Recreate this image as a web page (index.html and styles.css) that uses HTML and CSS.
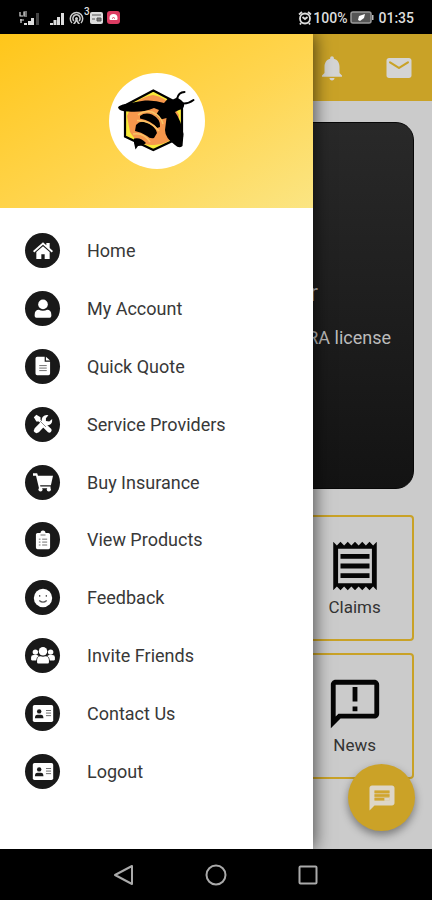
FILE: index.html
```html
<!DOCTYPE html>
<html lang="en">
<head>
<meta charset="utf-8">
<meta name="viewport" content="width=device-width, initial-scale=1">
<title>Menu</title>
<link rel="stylesheet" href="styles.css">
</head>
<body>
<div class="phone">
  <div class="status">
    <div class="status-left">
      <svg width="21" height="14" viewBox="0 0 21 14"><path d="M1 1v4h3M8 1H5v4h3M5 3h3M1 9h4M2 8v4" fill="none" stroke="#ddd" stroke-width="1.2"/><path d="M5 14v-2h3v2zM9 14v-4h3v4zM12 14V7h3v7z" fill="#ddd"/><path d="M17 14V2h3v12z" fill="#444"/></svg>
      <svg class="signal" width="15" height="14" viewBox="0 0 15 14"><path d="M0 14v-2h3v2zM3.500 14V9h3v5zM7 14V6h3v8zM11 14V2h3v12z" fill="#ddd"/></svg>
      <svg class="hotspot" width="15" height="14" viewBox="0 0 15 14"><g fill="none" stroke="#ccc" stroke-width="1.5"><path d="M3 12a6.2 6.2 0 1 1 9 0M5 10a3.6 3.6 0 1 1 5 0"/></g><path d="M7.500 6a2 2 0 0 1 1 3l2.500 4H9L7.500 10.500 6 13H4l2.500-4a2 2 0 0 1 1-3z" fill="#ccc"/></svg>
      <span class="count">3</span>
      <svg width="13" height="12" viewBox="0 0 13 12"><rect width="13" height="12" rx="2" fill="#ddd"/><path d="M2 3h9M7 6h4v3H7zM2 7h3" stroke="#555" fill="#777"/></svg>
      <svg class="app" width="13" height="13" viewBox="0 0 13 13"><rect width="13" height="13" rx="3" fill="#dc3c62"/><path d="M2.500 7a4 4 0 0 1 8 0v1q0 1-1 1h-6q-1 0-1-1z" fill="#fff"/><path d="M5 7.500q1.500-2 3 0" stroke="#dc3c62" fill="none"/></svg>
    </div>
    <div class="status-right">
      <svg width="14" height="14" viewBox="0 0 14 14"><g fill="none" stroke="#ddd" stroke-width="1.800"><circle cx="7" cy="7.500" r="5"/><path d="M1 3.500 4 1M13 3.500 10 1M4.500 6 7 8l2.500-2M3 12l-1 1.500M11 12l1 1.500"/></g></svg>
      <span>100%</span>
      <svg class="battery" width="24" height="13" viewBox="0 0 24 13"><rect x="1" y="1" width="20" height="11" rx="2" fill="#555" stroke="#999" stroke-width="1.500"/><path d="M22 4h1.500v5H22z" fill="#bbb"/><path d="M8 9l1-4 6-2-1 4-4 3z" fill="#fff"/></svg>
      <span>01:35</span>
    </div>
  </div>

  <div class="screen">
    <main class="page">
      <header class="appbar">
        <button class="icon-button" aria-label="Notifications"><svg width="30" height="30" viewBox="0 0 24 24"><path d="M12 22c1.100 0 2-.9 2-2h-4c0 1.100.9 2 2 2zm6-6v-5c0-3.070-1.630-5.640-4.500-6.320V4c0-.83-.67-1.500-1.500-1.500s-1.500.67-1.500 1.500v.68C7.640 5.360 6 7.920 6 11v5l-2 2v1h16v-1l-2-2z"/></svg></button>
        <button class="icon-button" aria-label="Messages"><svg width="30" height="30" viewBox="0 0 24 24"><path d="M20 4H4c-1.100 0-2 .9-2 2v12c0 1.100.9 2 2 2h16c1.100 0 2-.9 2-2V6c0-1.100-.9-2-2-2zm-.4 4.250-7.070 4.420c-.32.2-.74.2-1.060 0L4.400 8.250a.85.85 0 1 1 .9-1.440L12 11l6.700-4.190a.85.85 0 1 1 .9 1.440z"/></svg></button>
      </header>
      <section class="hero">
        <p class="hero-title">r</p>
        <p class="hero-text">RA license</p>
      </section>
      <section class="tiles">
        <a class="tile" href="#claims"><svg width="58" height="58" viewBox="0 0 24 24"><path d="M19.500 3.500 18 2l-1.500 1.500L15 2l-1.500 1.500L12 2l-1.500 1.500L9 2 7.500 3.500 6 2 4.500 3.500 3 2v20l1.500-1.500L6 22l1.500-1.500L9 22l1.500-1.500L12 22l1.500-1.500L15 22l1.500-1.500L18 22l1.500-1.500L21 22V2l-1.500 1.500zM19 19.090H5V4.910h14v14.180zM6 15h12v2H6zm0-4h12v2H6zm0-4h12v2H6z"/></svg>Claims</a>
        <a class="tile" href="#news"><svg width="58" height="58" viewBox="0 0 24 24"><path d="M20 2H4c-1.100 0-2 .9-2 2v18l4-4h14c1.100 0 2-.9 2-2V4c0-1.100-.9-2-2-2zm0 14H5.170L4 17.170V4h16v12zM11 5h2v6h-2zm0 8h2v2h-2z"/></svg>News</a>
      </section>
      <button class="fab" aria-label="Chat"><svg width="30" height="30" viewBox="0 0 24 24"><path d="M20 2H4c-1.100 0-2 .9-2 2v18l4-4h14c1.100 0 2-.9 2-2V4c0-1.100-.9-2-2-2z" fill="#ddd6c8"/><path d="M6 6h12v8H6z" fill="#d8bf80"/><path d="M6 6h12v2H6zm0 3h12v2H6zm0 3h8v2H6z" fill="#d0a52f"/><path d="M14 12h4v2h-4z" fill="#ddd6c8"/></svg></button>
    </main>

    <aside class="drawer">
      <div class="drawer-head">
        <div class="logo">
          <svg width="78" height="66" viewBox="0 0 78 66">
            <path d="M35.300 2.500 64 17.500v31L35.300 62 7 48.500v-31z" fill="#f8ea38" stroke="#000" stroke-width="2.200"/>
            <path d="M35 7Q47 9 57 20L61 27 60 45Q50 57 36 57 20 58 12 44L9 28Q16 10 35 7z" fill="#f6974c"/>
            <path d="M0 19.500Q1 17 8 16 18 13.500 27 12.500 38 12 46 15L50 10.500 54 12 59 9.500 63 12 66 15Q67 21 61 22L57 24Q63 32 65.500 46L64.500 58Q61 61 57 57 47 50 47 42L48.500 30 43 31.500 38 27 41 22 36 20Q24 25 10 23.500 1 23.500 0 19.500z"/>
            <path d="M22 28Q27 24 34 26.500 43 31 42 39L39 40Q34 33 22 30.500zM18 37Q22 32 29 34.500 38 39 39 45L36 50Q32 51 29 48 23 44 17 43zM16 50.500Q23 49 28 55 25 58 20 58L17.500 61.500 16 55z"/>
            <path d="M19 32.500Q32 32 41 43M20 27Q26 22 34 24 43 28 45 36M15 46Q26 44 32 54" fill="none" stroke="#f9c565" stroke-width="1.500"/>
            <path d="M59 11Q60.500 4 66.500 4M65 15.500Q70 16 75.500 12" fill="none" stroke="#000" stroke-width="2" stroke-linecap="round"/>
          </svg>
        </div>
      </div>
      <nav class="menu">
        <a href="#home"><span class="dot"><svg viewBox="0 0 24 24"><path d="M0 12 12 1.500 16 5V2.500h4V8.500l4 3.500-1.500 1.700L12 4.600 1.500 13.700z"/><path d="M4 13.200 12 6.400l8 6.800V21.500h-6V16h-4v5.500H4z"/></svg></span>Home</a>
        <a href="#account"><span class="dot"><svg viewBox="0 0 24 24"><circle cx="12" cy="6.500" r="5.800"/><path d="M2 19c0-4 2-6 5-6 3 1.500 7 1.500 10 0 3 0 5 2 5 6v1.500q0 2-2 2H4q-2 0-2-2z"/></svg></span>My Account</a>
        <a href="#quote"><span class="dot"><svg viewBox="0 0 24 24"><path d="M5 1h9v6h6.500v14q0 2-2 2H5q-2 0-2-2V3q0-2 2-2zM15.500 1l5 4.500h-5z"/><path class="cut" d="M7.500 11.500h9M7.500 14.500h9M7.500 17.500h9"/></svg></span>Quick Quote</a>
        <a href="#providers"><span class="dot"><svg viewBox="0 0 24 24"><path d="M1 4 4 1l5 3v3l4 4 1-.5 8 7.500q1 2-.5 3.500t-3.500.5l-7-7 .5-1.500L7 9H4z"/><path d="M23 6 19.500 9 15.500 8.500V5L18.500 1.500q-4-1-7 2-1.500 2-1 5L2 17q-2 3 0 5t5 0L15 13.500q3.500 1 6.500-1.500 2-2 1.500-6z"/><path class="cut" d="m8.500 8.500 7 7" stroke-width=".8"/></svg></span>Service Providers</a>
        <a href="#buy"><span class="dot"><svg viewBox="0 0 24 24"><path d="M0 1.500h5l1 3H24L21.500 16H8.500l.4 1.500H21v2H7.200L3.600 4.500H0z"/><circle cx="9" cy="21" r="2.500"/><circle cx="19" cy="21" r="2.500"/></svg></span>Buy Insurance</a>
        <a href="#products"><span class="dot"><svg viewBox="0 0 24 24"><path d="M5.500 3.500H9q0-3 3-3t3 3h3.500q2 0 2 2V21q0 2-2 2h-13q-2 0-2-2V5.500q0-2 2-2z"/><path class="cut" d="M9 6h6M7 11h2M11 11h6M7 14.500h2M11 14.500h6M7 18h2M11 18h6"/></svg></span>View Products</a>
        <a href="#feedback"><span class="dot"><svg viewBox="0 0 24 24"><circle cx="12" cy="12" r="11"/><path class="cut" d="M8 8.500v2M16 8.500v2M7.500 15q4.500 4 9 0" stroke-width="1.500"/></svg></span>Feedback</a>
        <a href="#invite"><span class="dot"><svg class="wide" viewBox="0 0 28 20"><circle cx="5" cy="6" r="3.200"/><circle cx="23" cy="6" r="3.200"/><path d="M0 15v-3q0-2.500 3-2.500h4l2 1Q6 12 6 16H1zM28 15v-3q0-2.500-3-2.500h-4l-2 1q3 1.500 3 5.500h5z"/><circle cx="14" cy="5" r="5"/><path d="M7 18v-2q0-5 4-5 3 1 6 0 4 0 4 5v2q0 1.500-1.500 1.500h-11Q7 19.500 7 18z"/></svg></span>Invite Friends</a>
        <a href="#contact"><span class="dot"><svg class="wide" viewBox="0 0 28 20"><rect x="2" width="24" height="20" rx="2"/><circle cx="9.500" cy="7.500" r="2.600" class="ink"/><path class="ink" d="M4.500 15.500q0-4 3-4h4q3 0 3 4z"/><path class="cut" d="M17.500 6.500h6M17.500 9.500h6M17.500 12.500h6" stroke-width="1"/></svg></span>Contact Us</a>
        <a href="#logout"><span class="dot"><svg class="wide" viewBox="0 0 28 20"><rect x="2" width="24" height="20" rx="2"/><circle cx="9.500" cy="7.500" r="2.600" class="ink"/><path class="ink" d="M4.500 15.500q0-4 3-4h4q3 0 3 4z"/><path class="cut" d="M17.500 6.500h6M17.500 9.500h6M17.500 12.500h6" stroke-width="1"/></svg></span>Logout</a>
      </nav>
    </aside>
  </div>

  <div class="navbar">
    <button aria-label="Back"><svg width="22" height="22" viewBox="0 0 22 22"><path d="M19 2v18L2 11z"/></svg></button>
    <button aria-label="Home screen"><svg width="22" height="22" viewBox="0 0 22 22"><circle cx="11" cy="11" r="9.500"/></svg></button>
    <button aria-label="Recent apps"><svg width="22" height="22" viewBox="0 0 22 22"><rect x="2.500" y="2.500" width="17" height="17" rx="1"/></svg></button>
  </div>
</div>
</body>
</html>
```
FILE: styles.css
```css
* { box-sizing: border-box; }
body { margin: 0; font-family: Roboto, "Liberation Sans", sans-serif; }
button { padding: 0; border: 0; background: none; }
a { color: inherit; text-decoration: none; }
p { margin: 0; }
svg { display: block; flex: none; }

.phone { display: flex; flex-direction: column; min-height: 100vh; background: #000; }

.status {
  height: 34px; padding: 1px 18px 0 19px;
  display: flex; justify-content: space-between; align-items: center;
  color: #ddd; font-size: 14px; font-weight: 500;
}
.status-left, .status-right { display: flex; align-items: center; }
.signal { margin-left: 10px; }
.hotspot { margin-left: 4px; }
.count { font-size: 10px; line-height: 10px; align-self: flex-start; margin-top: -4px; }
.app { margin-left: 4px; }
.status-right span { margin-left: 1px; }
.battery { margin: 0 3px 0 3px; }

.screen { position: relative; flex: 1; display: flex; overflow: hidden; }

.page { position: relative; flex: 1; background: #cbcbcb; color: #333; }
.appbar {
  height: 67px; padding: 0 18px;
  display: flex; justify-content: flex-end; align-items: center; gap: 37px;
  background: #c9a227;
}
.icon-button { fill: #d4d4d4; }
.hero {
  margin: 21px 18px 26px; padding: 154px 22px 0; height: 367px;
  border-radius: 18px; border: 1px solid #080808;
  background: linear-gradient(#292929, #131313);
  color: #bbb; text-align: right;
}
.hero-title { font-size: 24px; line-height: 32px; padding-right: 73px; }
.hero-text { font-size: 18px; line-height: 24px; margin-top: 17px; }

.tiles {
  margin: 0 18px; display: grid; grid-template-columns: repeat(3, 1fr);
  gap: 12px 20px;
}
.tile {
  grid-column: 3; height: 126px; padding-top: 20px;
  display: flex; flex-direction: column; align-items: center;
  border: 2px solid #c9a227; border-radius: 4px;
  font-size: 17px; line-height: 24px;
}
.tile svg { fill: #050505; }

.fab {
  position: absolute; right: 17px; bottom: 18px;
  width: 67px; height: 67px; border-radius: 50%;
  display: flex; align-items: center; justify-content: center;
  background: #cba227; box-shadow: 0 4px 8px rgba(0, 0, 0, .4);
}

.drawer {
  position: absolute; left: 0; top: 0; bottom: 0; width: 313px;
  display: flex; flex-direction: column;
  background: #fff; box-shadow: 2px 0 16px rgba(0, 0, 0, .6);
}
.drawer-head {
  height: 174px; display: flex; align-items: center; justify-content: center;
  background: linear-gradient(150deg, #ffc61a, #ffd54f 55%, #fbe583);
}
.logo {
  width: 96px; height: 96px; border-radius: 50%; background: #fff;
  display: flex; align-items: center; justify-content: center;
}
.menu {
  flex: 1; padding: 14px 25px 49px;
  display: grid; grid-auto-rows: 1fr;
  color: #383838; font-size: 18px;
}
.menu a { display: flex; align-items: center; gap: 27px; }
.dot {
  width: 35px; height: 35px; border-radius: 50%; background: #191919;
  display: flex; align-items: center; justify-content: center;
}
.dot svg { width: 20px; height: 20px; fill: #fff; }
.dot .wide { width: 24px; height: 17px; }
.dot .cut { fill: none; stroke: #555; }
.dot .ink { fill: #191919; }

.navbar {
  height: 51px; padding: 0 78px;
  display: flex; justify-content: space-between; align-items: center;
}
.navbar button { width: 92px; display: flex; justify-content: center; }
.navbar svg { fill: none; stroke: #aaa; stroke-width: 2; stroke-linejoin: round; }
```
